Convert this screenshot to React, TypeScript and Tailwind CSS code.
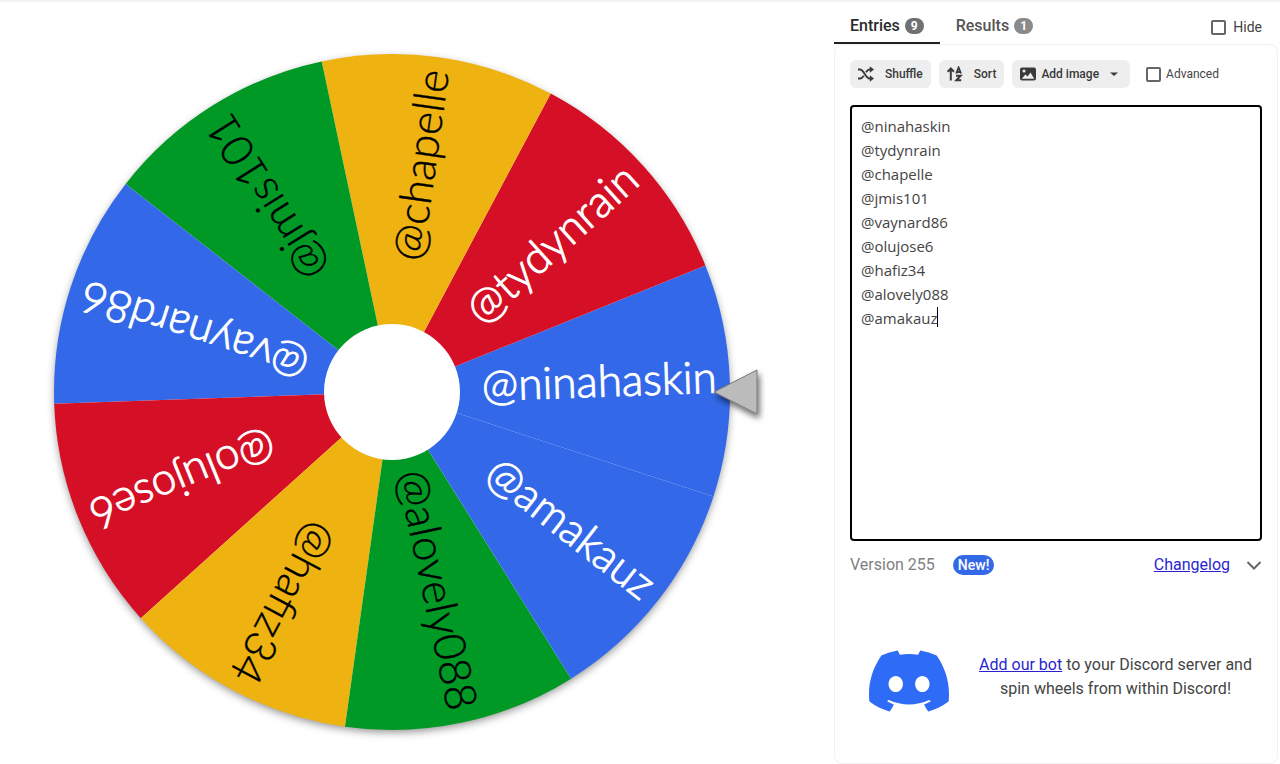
import { useState } from "react";
import { SiDiscord } from "react-icons/si";

const SLICE_COLORS = ["#3369e8", "#d50f25", "#eeb211", "#009925"];

const WHEEL = { cx: 392, cy: 390, radius: 338, hub: 68, textEnd: 325 };
const START_ANGLE = -2;

const INITIAL_ENTRIES = [
  "@ninahaskin",
  "@tydynrain",
  "@chapelle",
  "@jmis101",
  "@vaynard86",
  "@olujose6",
  "@hafiz34",
  "@alovely088",
  "@amakauz",
];

function slicePath(from: number, to: number) {
  const { cx, cy, radius } = WHEEL;
  const point = (deg: number) => {
    const rad = (deg * Math.PI) / 180;
    return `${cx + radius * Math.cos(rad)} ${cy + radius * Math.sin(rad)}`;
  };
  return `M${cx} ${cy}L${point(from)}A${radius} ${radius} 0 0 0 ${point(to)}Z`;
}

function Wheel({ entries }: { entries: string[] }) {
  const step = 360 / entries.length;

  return (
    <svg viewBox="0 0 834 762" className="block w-full" role="img" aria-label="Wheel of names">
      <defs>
        <filter id="wheelShadow" x="-10%" y="-10%" width="120%" height="120%">
          <feDropShadow dx="0" dy="3" stdDeviation="4" floodColor="#000" floodOpacity="0.45" />
        </filter>
        <filter id="pointerShadow" x="-30%" y="-30%" width="170%" height="170%">
          <feDropShadow dx="2" dy="4" stdDeviation="3" floodColor="#000" floodOpacity="0.6" />
        </filter>
      </defs>

      <circle cx={WHEEL.cx} cy={WHEEL.cy} r={WHEEL.radius - 1} fill="#fff" filter="url(#wheelShadow)" />

      {entries.map((entry, i) => {
        const angle = START_ANGLE - i * step;
        return (
          <path
            key={entry}
            d={slicePath(angle + step / 2, angle - step / 2)}
            fill={SLICE_COLORS[i % SLICE_COLORS.length]}
          />
        );
      })}

      {entries.map((entry, i) => {
        const color = i % 4 < 2 ? "#fff" : "#000";
        return (
          <text
            key={entry}
            x={WHEEL.cx + WHEEL.textEnd}
            y={WHEEL.cy}
            dy="12"
            textAnchor="end"
            fontSize="44"
            fill={color}
            stroke={color}
            strokeWidth={color === "#fff" ? 1 : 0.4}
            transform={`rotate(${START_ANGLE - i * step} ${WHEEL.cx} ${WHEEL.cy})`}
            className="font-['Lato',sans-serif] font-light"
          >
            {entry}
          </text>
        );
      })}

      <circle cx={WHEEL.cx} cy={WHEEL.cy} r={WHEEL.hub} fill="#fff" />

      <path
        d="M714 390L757 368V412Z"
        fill="#bbb"
        stroke="#777"
        strokeLinejoin="round"
        filter="url(#pointerShadow)"
      />
    </svg>
  );
}

function ShuffleIcon() {
  return (
    <svg viewBox="0 0 16 16" className="size-4">
      <path
        d="M0 3.5H2C6 3.5 7.500 12.5 11.5 12.5H13M0 12.5H2C3.600 12.5 4.800 11.3 5.800 9.800M8 6.200C9 4.700 10 3.500 11.5 3.500H13"
        fill="none"
        stroke="currentColor"
        strokeWidth="1.9"
      />
      <path d="M11.800 0.300L16 3.500L11.800 6.700ZM11.800 9.300L16 12.500L11.800 15.700Z" fill="currentColor" />
    </svg>
  );
}

function SortIcon() {
  return (
    <svg viewBox="0 0 16 16" className="size-4" fill="none" stroke="currentColor" strokeWidth="2">
      <path d="M3.800 14.500V3M0.700 5.800L3.800 2.500L6.900 5.800" />
      <path d="M9.200 7.500L11.600 1.500L14 7.500M10 6H13.200" strokeWidth="1.800" />
      <path d="M9 9.700H13.600L9.400 14.200H14.200" />
    </svg>
  );
}

function ImageIcon() {
  return (
    <svg viewBox="0 0 16 16" className="size-4" fill="currentColor">
      <path
        fillRule="evenodd"
        d="M2 1.5H14A2 2 0 0 1 16 3.500V12.500A2 2 0 0 1 14 14.500H2A2 2 0 0 1 0 12.500V3.500A2 2 0 0 1 2 1.500ZM1.800 12.700H14.200L10.500 6.500L7.600 10.500L5.400 8.600ZM4 3.600A1.500 1.500 0 1 0 4 6.600A1.500 1.500 0 1 0 4 3.600Z"
      />
    </svg>
  );
}

const TOOL_BUTTON =
  "flex h-7 items-center rounded-md bg-[#eeeeee] px-2 text-xs font-medium text-[#3a3a3a] hover:bg-[#e2e2e2]";
const CHECKBOX =
  "size-[15px] appearance-none rounded-xs border-2 border-[#666666] checked:bg-[#666666]";

export default function App() {
  const [tab, setTab] = useState("entries");
  const [text, setText] = useState(INITIAL_ENTRIES.join("\n"));

  const entries = text.split("\n").filter((line) => line.trim() !== "");

  const tabs = [
    { id: "entries", label: "Entries", count: entries.length },
    { id: "results", label: "Results", count: 1 },
  ];

  return (
    <div className="flex min-h-screen flex-col border-t-2 border-[#f3f3f3] bg-white font-['Roboto',sans-serif] text-[#444444]">
      <div className="flex flex-1">
        <main className="min-w-0 flex-1">
          <Wheel entries={entries} />
        </main>

        <aside className="flex w-[446px] shrink-0 flex-col pt-2 pr-[2px]">
          <div className="flex items-center justify-between pr-4">
            <div className="flex" role="tablist">
              {tabs.map((t) => (
                <button
                  key={t.id}
                  role="tab"
                  aria-selected={tab === t.id}
                  onClick={() => setTab(t.id)}
                  className={`flex h-[34px] items-center gap-[5px] border-b-2 px-4 text-base font-medium ${
                    tab === t.id ? "border-[#222222] text-[#2b2b2b]" : "border-transparent text-[#555555]"
                  }`}
                >
                  {t.label}
                  <span
                    className={`flex h-4 items-center rounded-full px-[6px] text-xs font-bold text-white ${
                      tab === t.id ? "bg-[#707070]" : "bg-[#8a8a8a]"
                    }`}
                  >
                    {t.count}
                  </span>
                </button>
              ))}
            </div>
            <label className="flex items-center gap-[7px] text-sm">
              <input type="checkbox" className={CHECKBOX} />
              Hide
            </label>
          </div>

          <section className="flex-1 rounded-lg px-4 pt-4 inset-ring inset-ring-[#f1f1f1]">
            <div className="flex items-center gap-2">
              <button className={`${TOOL_BUTTON} gap-[11px]`}>
                <ShuffleIcon />
                Shuffle
              </button>
              <button className={`${TOOL_BUTTON} gap-[11px]`}>
                <SortIcon />
                Sort
              </button>
              <button className={`${TOOL_BUTTON} gap-[5px]`}>
                <ImageIcon />
                Add image
                <svg viewBox="0 0 16 16" className="ml-[2px] size-4" fill="currentColor">
                  <path d="M4 6.500H12L8 10Z" />
                </svg>
              </button>
              <label className="ml-2 flex items-center gap-[5px] text-xs">
                <input type="checkbox" className={CHECKBOX} />
                Advanced
              </label>
            </div>

            <div className="relative mt-[17px]">
              <textarea
                aria-label="Entries"
                spellCheck={false}
                value={text}
                onChange={(e) => setText(e.target.value)}
                className="block h-[436px] w-full resize-none rounded-sm border-2 border-black px-[9px] py-[7px] font-['Open_Sans',sans-serif] text-[15px] leading-6 text-[#444444] caret-transparent outline-none"
              />
              {/* text cursor */}
              <span className="absolute top-[202px] left-[87px] h-5 w-px bg-black" />
            </div>

            <div className="mt-2 flex h-8 items-center">
              <span className="text-[#808080]">Version 255</span>
              <span className="ml-[18px] flex h-5 items-center rounded-full bg-[#3369e8] px-[5px] text-sm font-medium text-white">
                New!
              </span>
              <a href="#changelog" className="ml-auto text-[#2a1fd0] underline">
                Changelog
              </a>
              <button aria-label="Expand changelog" className="ml-4">
                <svg viewBox="0 0 16 16" className="size-4" fill="none" stroke="#666666" strokeWidth="2">
                  <path d="M1.500 5L8 11.500L14.500 5" />
                </svg>
              </button>
            </div>

            <div className="mt-[60px] flex items-center gap-6 pr-1 pl-[19px]">
              <SiDiscord className="size-20 shrink-0 text-[#2e6bf6]" />
              <p className="flex-1 pb-2 text-center text-base">
                <a href="#discord" className="text-[#2a1fd0] underline">
                  Add our bot
                </a>{" "}
                to your Discord server and
                <br />
                spin wheels from within Discord!
              </p>
            </div>
          </section>
        </aside>
      </div>
    </div>
  );
}
